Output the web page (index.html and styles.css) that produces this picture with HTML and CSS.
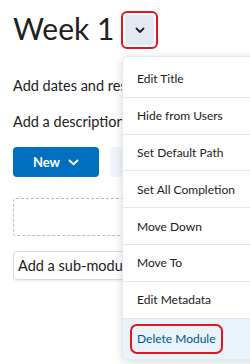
FILE: index.html
```html
<!DOCTYPE html>
<html>
<head>
<meta charset="utf-8">
<link rel="stylesheet" href="styles.css">
</head>
<body>
<div class="page">
  <div class="title-row">
    <h1 class="title">Week 1</h1>
    <div class="opener-wrap">
      <button class="opener" aria-label="Actions">
        <svg width="10" height="7" viewBox="0 0 10 7"><path d="M1.5 1.5 L5 5 L8.5 1.5" fill="none" stroke="#202122" stroke-width="1.8" stroke-linecap="round" stroke-linejoin="round"/></svg>
      </button>
    </div>
  </div>
  <p class="line first">Add dates and restrictions...</p>
  <p class="line">Add a description...</p>
  <div class="buttons">
    <button class="btn-primary">New
      <svg width="11" height="7" viewBox="0 0 11 7"><path d="M1.5 1.5 L5.5 5.2 L9.5 1.5" fill="none" stroke="#fff" stroke-width="2" stroke-linecap="round" stroke-linejoin="round"/></svg>
    </button>
    <button class="btn-secondary">Upload / Create</button>
  </div>
  <div class="dropzone"></div>
  <div class="submodule">Add a sub-module...</div>

  <ul class="menu">
    <li class="item">Edit Title</li>
    <li class="item">Hide from Users</li>
    <li class="item">Set Default Path</li>
    <li class="item">Set All Completion</li>
    <li class="item">Move Down</li>
    <li class="item">Move To</li>
    <li class="item">Edit Metadata</li>
    <li class="item active"><span class="mark">Delete Module</span></li>
  </ul>
</div>
</body>
</html>
```
FILE: styles.css
```css
* { box-sizing: border-box; }
html, body { margin: 0; padding: 0; background: #fff; }
body {
  font-family: Lato, "Open Sans", sans-serif;
  color: #202122;
}
.page {
  position: relative;
  width: 250px;
  height: 364px;
  overflow: hidden;
  padding: 7px 0 0 13px;
}
.title-row {
  display: flex;
  align-items: center;
  gap: 7px;
}
.title {
  margin: 0;
  font-size: 30px;
  font-weight: 400;
  line-height: 42px;
  white-space: nowrap;
}
.opener-wrap {
  margin-top: 4px;
  border: 2px solid #e4151f;
  border-radius: 6px;
  padding: 2px;
}
.opener {
  display: flex;
  align-items: center;
  justify-content: center;
  width: 29px;
  height: 30px;
  border: 0;
  border-radius: 4px;
  background: #e3e9f1;
  padding: 0;
}
.line {
  margin: 0;
  font-size: 14.5px;
  line-height: 20px;
  white-space: nowrap;
}
.line.first { margin-top: 27px; }
.line + .line { margin-top: 16px; }
.buttons {
  display: flex;
  gap: 11px;
  margin-top: 15px;
}
.btn-primary {
  flex: none;
  display: flex;
  align-items: center;
  justify-content: center;
  gap: 8px;
  width: 86px;
  height: 30px;
  border: 0;
  border-radius: 4px;
  background: #006fbf;
  color: #fff;
  font-family: Lato, sans-serif;
  font-weight: 700;
  font-size: 13px;
  padding: 0;
}
.btn-secondary {
  flex: none;
  height: 30px;
  width: 150px;
  border: 0;
  border-radius: 4px;
  background: #f1f5fb;
  color: #494c4e;
  font-family: Lato, sans-serif;
  font-weight: 700;
  font-size: 13px;
}
.dropzone {
  margin-top: 21px;
  height: 38px;
  width: 260px;
  border: 1px dashed #b9bec4;
  border-radius: 3px;
}
.submodule {
  margin-top: 15px;
  height: 29px;
  width: 260px;
  border: 1px solid #d3d9e3;
  border-radius: 4px;
  padding: 0 0 0 4px;
  font-size: 14.5px;
  line-height: 27px;
  white-space: nowrap;
  box-shadow: 0 2px 0 rgba(0,0,0,0.04);
}
.menu {
  position: absolute;
  left: 122px;
  top: 56px;
  width: 150px;
  margin: 0;
  padding: 4px 0 0 0;
  list-style: none;
  background: #fff;
  border: 1px solid #e3e9f1;
  border-radius: 6px;
  box-shadow: 0 2px 10px rgba(0,0,0,0.15);
  overflow: hidden;
}
.item {
  height: 36.8px;
  display: flex;
  align-items: center;
  padding-left: 14px;
  font-size: 12px;
  color: #202122;
  border-bottom: 1px solid #e3e9f1;
  white-space: nowrap;
}
.item.active {
  background: #e8f3fc;
  color: #00568f;
  border-bottom: 0;
  height: 40px;
}
.mark {
  border: 2px solid #e4151f;
  border-radius: 7px;
  padding: 5px 5px 6px 5px;
  margin-left: -7px;
}
```
